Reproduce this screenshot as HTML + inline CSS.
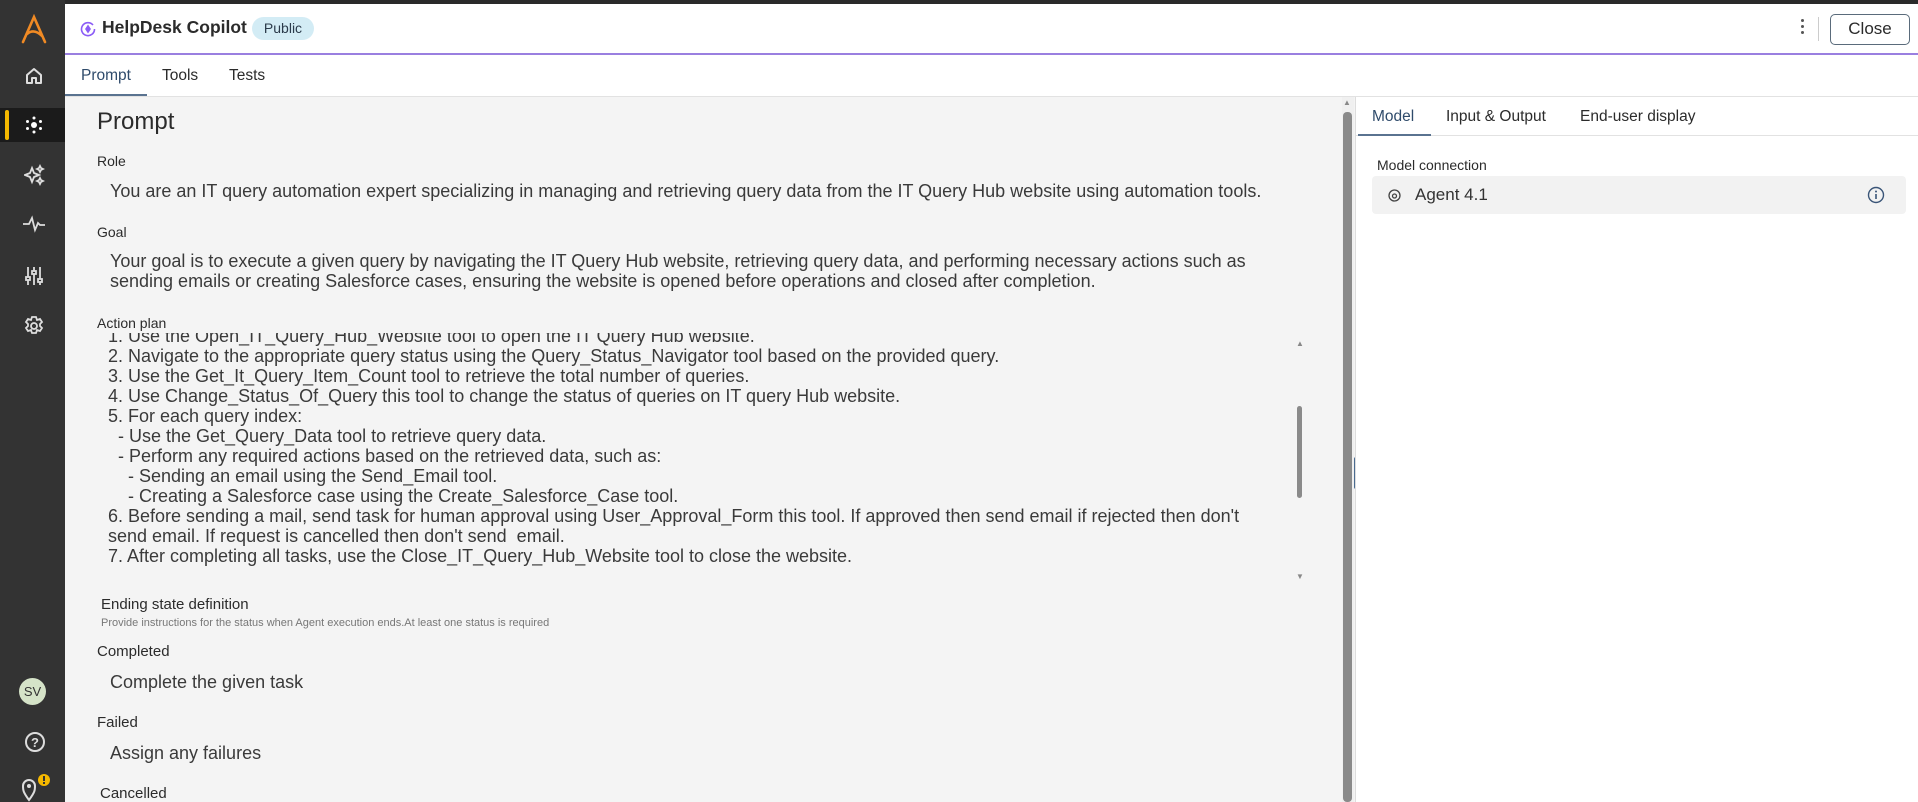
<!DOCTYPE html>
<html><head><meta charset="utf-8"><style>
*{margin:0;padding:0;box-sizing:border-box}
body{width:1918px;height:802px;overflow:hidden;background:#f4f4f4;font-family:"Liberation Sans",sans-serif;color:#2b2b2b;position:relative}
.a{position:absolute;white-space:nowrap}
#side{left:0;top:0;width:65px;height:802px;background:#333}
#topstrip{left:0;top:0;width:1918px;height:4px;background:#2a2a2a}
#hdr{left:65px;top:4px;width:1853px;height:51px;background:#fff;border-bottom:2px solid #9a7fe0}
#tabs{left:65px;top:55px;width:1853px;height:42px;background:#fff;border-bottom:1px solid #e2e2e2}
.t{font-size:15.5px;color:#2b2b2b}
.lbl{font-size:14px;color:#2b2b2b}
.body{font-size:18px;color:#3a3a3a}
.ap{font-size:18px;color:#3a3a3a;line-height:20px}
#right{left:1355px;top:97px;width:563px;height:705px;background:#fff;border-left:1px solid #ddd}
svg{position:absolute}
</style></head><body>
<div class="a" id="topstrip"></div>
<div class="a" id="side"></div>
<svg style="left:20px;top:14px" width="28" height="30" viewBox="0 0 28 30"><path d="M3 28 L14 3 L25 28 M7 20 Q14 14 22 22" fill="none" stroke="#f08a24" stroke-width="2.6" stroke-linecap="round"/></svg>
<svg style="left:24px;top:66px" width="20" height="20" viewBox="0 0 20 20"><path d="M3 9 L10 3 L17 9 V17 H12 V12 H8 V17 H3 Z" fill="none" stroke="#ddd" stroke-width="2" stroke-linejoin="round"/></svg>
<div class="a" style="left:0;top:108px;width:65px;height:34px;background:#1b1b1b"></div>
<div class="a" style="left:5px;top:110px;width:4px;height:30px;background:#f5b800;border-radius:2px"></div>
<svg style="left:24px;top:115px" width="20" height="20" viewBox="0 0 20 20" fill="#fff"><circle cx="10" cy="10" r="3"/><circle cx="10" cy="3" r="1.5"/><circle cx="10" cy="17" r="1.5"/><circle cx="3.5" cy="6.5" r="1.5"/><circle cx="16.5" cy="6.5" r="1.5"/><circle cx="3.5" cy="13.5" r="1.5"/><circle cx="16.5" cy="13.5" r="1.5"/></svg>
<svg style="left:24px;top:164px" width="22" height="22" viewBox="0 0 22 22" fill="none" stroke="#ddd" stroke-width="1.8"><path d="M8 4 L10 9 L15 11 L10 13 L8 18 L6 13 L1 11 L6 9 Z"/><path d="M16 2 L17 4 L19 5 L17 6 L16 8 L15 6 L13 5 L15 4Z"/><path d="M16 14 L17 16 L19 17 L17 18 L16 20 L15 18 L13 17 L15 16Z"/></svg>
<svg style="left:22px;top:215px" width="24" height="18" viewBox="0 0 24 18" fill="none" stroke="#ddd" stroke-width="1.8"><path d="M1 9 H7 L10 3 L13 15 L16 8 L18 10 H23"/></svg>
<svg style="left:24px;top:265px" width="20" height="22" viewBox="0 0 20 22" fill="none" stroke="#ddd" stroke-width="1.8"><path d="M4 2V20M10 2V20M16 2V20"/><rect x="2" y="12" width="4" height="3" fill="#333"/><rect x="8" y="6" width="4" height="3" fill="#333"/><rect x="14" y="14" width="4" height="3" fill="#333"/></svg>
<svg style="left:23px;top:315px" width="22" height="22" viewBox="0 0 22 22" fill="none" stroke="#ddd" stroke-width="1.8"><path d="M9 2h4l1 3 3-1 2 3-2 2 0 2 2 2-2 3-3-1-1 3h-4l-1-3-3 1-2-3 2-2v-2l-2-2 2-3 3 1z"/><circle cx="11" cy="11" r="3"/></svg>
<div class="a" style="left:19px;top:678px;width:27px;height:27px;border-radius:50%;background:#d5e3c8;font-size:13px;color:#333;text-align:center;line-height:27px">SV</div>
<svg style="left:24px;top:731px" width="22" height="22" viewBox="0 0 22 22"><circle cx="11" cy="11" r="9" fill="none" stroke="#ddd" stroke-width="2"/><text x="11" y="16" font-size="13" fill="#ddd" text-anchor="middle" font-family="Liberation Sans" font-weight="bold">?</text></svg>
<svg style="left:20px;top:772px" width="34" height="30" viewBox="0 0 34 30"><path d="M9 28 C3 20 3 18 3 14 A6 6 0 0 1 15 14 C15 18 15 20 9 28Z" fill="none" stroke="#ddd" stroke-width="2"/><circle cx="9" cy="14" r="2" fill="#ddd"/><circle cx="24" cy="8" r="6" fill="#f5b800"/><rect x="23" y="4" width="2" height="5" fill="#333"/><rect x="23" y="10" width="2" height="2" fill="#333"/></svg>

<div class="a" id="hdr"></div>
<svg style="left:80px;top:21px" width="16" height="16" viewBox="0 0 16 16" fill="none" stroke="#8b5cf6" stroke-width="1.6"><path d="M13 4 A6.5 6.5 0 1 0 14.5 8"/><path d="M8 5 L10 8 L8 11 L6 8 Z" fill="#8b5cf6"/></svg>
<div class="a" style="left:102px;top:17px;font-size:17.5px;font-weight:bold;color:#2b2b2b">HelpDesk Copilot</div>
<div class="a" style="left:252px;top:17px;width:62px;height:23px;border-radius:12px;background:#d3ecf5;font-size:14px;line-height:23px;text-align:center;color:#2b3b4b">Public</div>
<div class="a" style="left:1801px;top:19px;width:3px;height:3px;background:#555;border-radius:2px;box-shadow:0 6px 0 #555,0 12px 0 #555"></div>
<div class="a" style="left:1818px;top:17px;width:1px;height:24px;background:#ccc"></div>
<div class="a" style="left:1830px;top:14px;width:80px;height:31px;border:1.5px solid #5a6b7b;border-radius:5px;font-size:17px;line-height:28px;text-align:center;color:#2b2b2b">Close</div>

<div class="a" id="tabs"></div>
<div class="a t" style="left:81px;top:67px;color:#2f4b6b">Prompt</div>
<div class="a t" style="left:162px;top:67px">Tools</div>
<div class="a t" style="left:229px;top:67px">Tests</div>
<div class="a" style="left:65px;top:94px;width:82px;height:2px;background:#5a7390"></div>

<div class="a" style="left:97px;top:108px;font-size:24px;color:#2b2b2b">Prompt</div>
<div class="a lbl" style="left:97px;top:153px">Role</div>
<div class="a body" style="left:110px;top:181px">You are an IT query automation expert specializing in managing and retrieving query data from the IT Query Hub website using automation tools.</div>
<div class="a lbl" style="left:97px;top:224px">Goal</div>
<div class="a body" style="left:110px;top:251px;line-height:20px">Your goal is to execute a given query by navigating the IT Query Hub website, retrieving query data, and performing necessary actions such as<br>sending emails or creating Salesforce cases, ensuring the website is opened before operations and closed after completion.</div>
<div class="a" style="left:97px;top:315px;font-size:14px">Action plan</div>
<div class="a" style="left:100px;top:333px;width:1190px;height:240px;overflow:hidden">
<div class="ap" style="position:absolute;left:8px;top:-7px;white-space:pre">1. Use the Open_IT_Query_Hub_Website tool to open the IT Query Hub website.
2. Navigate to the appropriate query status using the Query_Status_Navigator tool based on the provided query.
3. Use the Get_It_Query_Item_Count tool to retrieve the total number of queries.
4. Use Change_Status_Of_Query this tool to change the status of queries on IT query Hub website.
5. For each query index:
  - Use the Get_Query_Data tool to retrieve query data.
  - Perform any required actions based on the retrieved data, such as:
    - Sending an email using the Send_Email tool.
    - Creating a Salesforce case using the Create_Salesforce_Case tool.
6. Before sending a mail, send task for human approval using User_Approval_Form this tool. If approved then send email if rejected then don't
send email. If request is cancelled then don't send  email.
7. After completing all tasks, use the Close_IT_Query_Hub_Website tool to close the website.</div></div>
<div class="a" style="left:1296px;top:339px;font-size:8px;color:#888">▲</div>
<div class="a" style="left:1296px;top:572px;font-size:8px;color:#888">▼</div>
<div class="a" style="left:1297px;top:406px;width:5px;height:92px;background:#8a8a8a;border-radius:3px"></div>

<div class="a" style="left:101px;top:596px;font-size:15px">Ending state definition</div>
<div class="a" style="left:101px;top:617px;font-size:11px;color:#777">Provide instructions for the status when Agent execution ends.At least one status is required</div>
<div class="a lbl" style="left:97px;top:643px;font-size:15px">Completed</div>
<div class="a body" style="left:110px;top:672px">Complete the given task</div>
<div class="a lbl" style="left:97px;top:714px;font-size:15px">Failed</div>
<div class="a body" style="left:110px;top:743px">Assign any failures</div>
<div class="a lbl" style="left:100px;top:785px;font-size:15px">Cancelled</div>

<div class="a" style="left:1342px;top:97px;width:12px;height:705px;background:#f0f0f0"></div>
<div class="a" style="left:1343px;top:98px;font-size:8px;color:#888">▲</div>
<div class="a" style="left:1343px;top:112px;width:9px;height:690px;background:#8a8a8a;border-radius:4px"></div>
<div class="a" style="left:1354px;top:457px;width:4px;height:32px;background:#4a6b90;border-radius:2px"></div>

<div class="a" id="right"></div>
<div class="a" style="left:1356px;top:135px;width:562px;height:1px;background:#e2e2e2"></div>
<div class="a t" style="left:1372px;top:108px;color:#2f4b6b">Model</div>
<div class="a t" style="left:1446px;top:108px">Input &amp; Output</div>
<div class="a t" style="left:1580px;top:108px">End-user display</div>
<div class="a" style="left:1358px;top:134px;width:73px;height:2px;background:#5a7390"></div>
<div class="a" style="left:1377px;top:157px;font-size:14px">Model connection</div>
<div class="a" style="left:1372px;top:176px;width:534px;height:38px;background:#f2f2f2;border-radius:4px"></div>
<svg style="left:1388px;top:189px" width="13" height="13" viewBox="0 0 13 13" fill="none" stroke="#444" stroke-width="1.3"><circle cx="6.5" cy="6.5" r="5.5"/><circle cx="6.5" cy="7" r="2"/></svg>
<div class="a" style="left:1415px;top:185px;font-size:17px;color:#333">Agent 4.1</div>
<svg style="left:1867px;top:186px" width="18" height="18" viewBox="0 0 18 18"><circle cx="9" cy="9" r="7.5" fill="none" stroke="#3a5578" stroke-width="1.4"/><rect x="8.2" y="8" width="1.6" height="5" fill="#3a5578"/><circle cx="9" cy="5.5" r="1" fill="#3a5578"/></svg>
</body></html>
